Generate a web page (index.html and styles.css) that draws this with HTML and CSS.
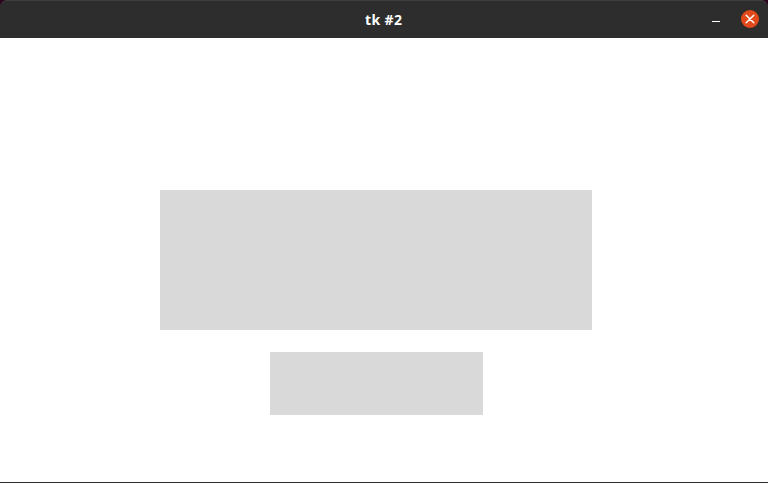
FILE: index.html
```html
<!DOCTYPE html>
<html lang="en">
<head>
<meta charset="utf-8">
<title>tk #2</title>
<link rel="stylesheet" href="styles.css">
</head>
<body>
<div class="window">
  <header class="titlebar">
    <span class="title">tk #2</span>
    <div class="controls">
      <svg class="minimize" width="10" height="10" viewBox="0 0 10 10"><path d="M1 7.500h8" stroke="#fff" stroke-width="1"/></svg>
      <svg class="close" width="18" height="18" viewBox="0 0 18 18"><circle cx="9" cy="9" r="9" fill="#e2491a"/><path d="M5.200 5.200l7.600 7.600M12.800 5.200l-7.600 7.600" stroke="#fff" stroke-width="1.500" stroke-linecap="round"/></svg>
    </div>
  </header>
  <main class="content">
    <div class="box box-large"></div>
    <div class="box box-small"></div>
  </main>
  <div class="edge"></div>
</div>
</body>
</html>
```
FILE: styles.css
```css
html, body {
  margin: 0;
  padding: 0;
  background: #fff;
}
.window {
  width: 768px;
  height: 483px;
  display: flex;
  flex-direction: column;
  overflow: hidden;
  background: #2c001e;
}
.titlebar {
  flex: none;
  height: 38px;
  box-sizing: border-box;
  display: flex;
  align-items: center;
  justify-content: flex-end;
  padding: 0 9px 1px 0;
  background: #2d2d2d;
  border-top: 1px solid #3f3f3f;
  border-radius: 7px 7px 0 0;
  position: relative;
}
.title {
  position: absolute;
  left: 365px;
  top: 10px;
  font: 700 14px/18px "Open Sans", sans-serif;
  letter-spacing: 0.4px;
  color: #fff;
}
.controls {
  display: flex;
  align-items: center;
  gap: 20px;
}
.content {
  flex: 1;
  background: #fff;
  display: flex;
  flex-direction: column;
  padding: 152px 0 0 160px;
  gap: 22px;
}
.box {
  background: #d9d9d9;
}
.box-large {
  width: 432px;
  height: 140px;
}
.box-small {
  width: 213px;
  height: 63px;
  margin-left: 110px;
}
.edge {
  flex: none;
  height: 1px;
  background: #2d2d2d;
}
```
